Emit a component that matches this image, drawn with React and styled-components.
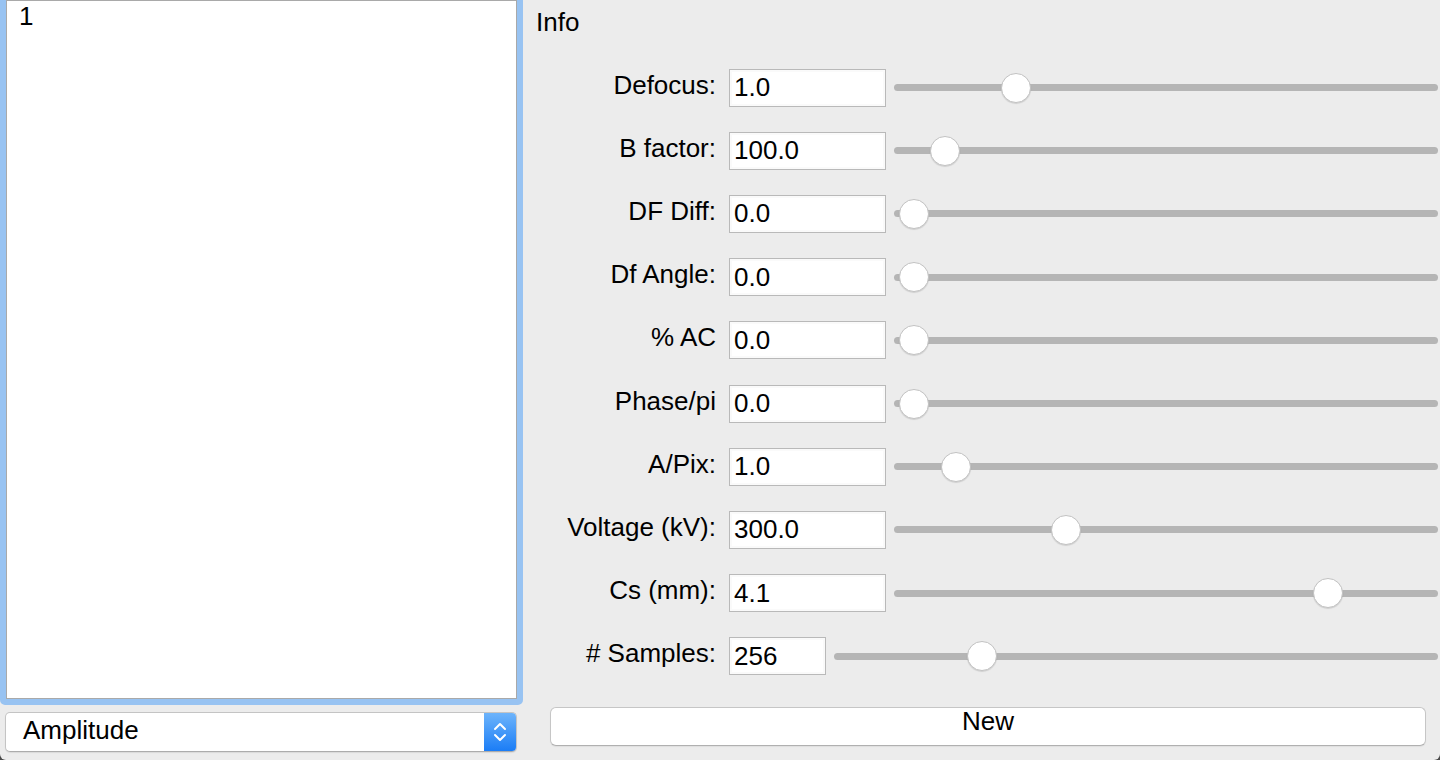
import React from "react";
import styled, { createGlobalStyle } from "styled-components";

const GlobalStyle = createGlobalStyle`
  html, body {
    margin: 0;
    padding: 0;
    background: #4a4a4a;
  }
  * {
    box-sizing: border-box;
  }
`;

const Window = styled.div`
  width: 1440px;
  height: 760px;
  overflow: hidden;
  background: #ececec;
  border-radius: 0 0 6px 6px;
  display: grid;
  grid-template-columns: 523px 1fr;
  font-family: "Liberation Sans", Arial, sans-serif;
  font-size: 26px;
  color: #000;
`;

const LeftColumn = styled.div`
  display: flex;
  flex-direction: column;
`;

const FocusRing = styled.div`
  margin-top: -6px;
  height: 711px;
  border: 6px solid #98c3f2;
  border-radius: 5px;
  display: flex;
`;

const List = styled.div`
  flex: 1;
  background: #fff;
  border: 1px solid #a9a9a9;
  padding: 1px 12px;
  line-height: 28px;
`;

const SelectBox = styled.div`
  margin: 7px 6px 0 5px;
  height: 40px;
  display: flex;
  align-items: stretch;
  background: #fff;
  border: 1px solid #c4c4c4;
  border-bottom-color: #acacac;
  border-radius: 5px;
  box-shadow: 0 1px 1px rgba(0, 0, 0, 0.08);
  overflow: hidden;
`;

const SelectText = styled.div`
  flex: 1;
  padding: 0 0 4px 17px;
  display: flex;
  align-items: center;
`;

const Stepper = styled.div`
  width: 32px;
  background: linear-gradient(#6db4fb, #1b7df6);
  display: flex;
  align-items: center;
  justify-content: center;
`;

const RightColumn = styled.div`
  display: flex;
  flex-direction: column;
  padding: 8px 0 0 13px;
`;

const Heading = styled.div`
  line-height: 28px;
  height: 28px;
  margin-bottom: 20px;
`;

const Row = styled.div`
  display: flex;
  align-items: center;
  height: 63.2px;
`;

const Label = styled.div`
  width: 180px;
  text-align: right;
  margin-right: 13px;
  margin-top: -5px;
  white-space: nowrap;
`;

const Field = styled.div`
  width: ${(p) => p.$width}px;
  height: 38px;
  background: #fff;
  border: 1px solid #b9b9b9;
  box-shadow: inset 0 0 0 2px #fafafa;
  padding-left: 4px;
  display: flex;
  align-items: center;
`;

const Slider = styled.div`
  position: relative;
  flex: 1;
  margin: 0 2px 0 8px;
  height: 30px;
  display: flex;
  align-items: center;
`;

const Track = styled.div`
  flex: 1;
  height: 7px;
  border-radius: 3.5px;
  background: #b5b5b5;
`;

const Thumb = styled.div`
  position: absolute;
  top: 0;
  width: 30px;
  height: 30px;
  margin-left: -15px;
  border-radius: 50%;
  background: #fff;
  border: 1px solid #c2c2c2;
  box-shadow: 0 1px 1px rgba(0, 0, 0, 0.12);
`;

const Button = styled.div`
  margin: 19px 14px 0 14px;
  height: 39px;
  background: #fff;
  border: 1px solid #c6c6c6;
  border-bottom-color: #b0b0b0;
  border-radius: 6px;
  box-shadow: 0 1px 1px rgba(0, 0, 0, 0.06);
  display: flex;
  align-items: center;
  justify-content: center;
  padding-bottom: 9px;
`;

const params = [
  { label: "Defocus:", value: "1.0", pos: 0.202 },
  { label: "B factor:", value: "100.0", pos: 0.062 },
  { label: "DF Diff:", value: "0.0", pos: 0 },
  { label: "Df Angle:", value: "0.0", pos: 0 },
  { label: "% AC", value: "0.0", pos: 0 },
  { label: "Phase/pi", value: "0.0", pos: 0 },
  { label: "A/Pix:", value: "1.0", pos: 0.083 },
  { label: "Voltage (kV):", value: "300.0", pos: 0.302 },
  { label: "Cs (mm):", value: "4.1", pos: 0.822 },
  { label: "# Samples:", value: "256", pos: 0.227, width: 97 },
];

function StepperIcon() {
  return (
    <svg width="16" height="26" viewBox="0 0 16 26">
      <path
        d="M3 10 L8 5 L13 10 M3 16 L8 21 L13 16"
        fill="none"
        stroke="#fff"
        strokeWidth="2"
        strokeLinecap="round"
        strokeLinejoin="round"
      />
    </svg>
  );
}

function ParamRow({ label, value, pos, width = 157 }) {
  return (
    <Row>
      <Label>{label}</Label>
      <Field $width={width}>{value}</Field>
      <Slider>
        <Track />
        <Thumb style={{ left: `calc(20px + (100% - 40px) * ${pos})` }} />
      </Slider>
    </Row>
  );
}

export default function App() {
  return (
    <>
      <GlobalStyle />
      <Window>
        <LeftColumn>
          <FocusRing>
            <List>1</List>
          </FocusRing>
          <SelectBox>
            <SelectText>Amplitude</SelectText>
            <Stepper>
              <StepperIcon />
            </Stepper>
          </SelectBox>
        </LeftColumn>
        <RightColumn>
          <Heading>Info</Heading>
          {params.map((p) => (
            <ParamRow key={p.label} {...p} />
          ))}
          <Button>New</Button>
        </RightColumn>
      </Window>
    </>
  );
}
